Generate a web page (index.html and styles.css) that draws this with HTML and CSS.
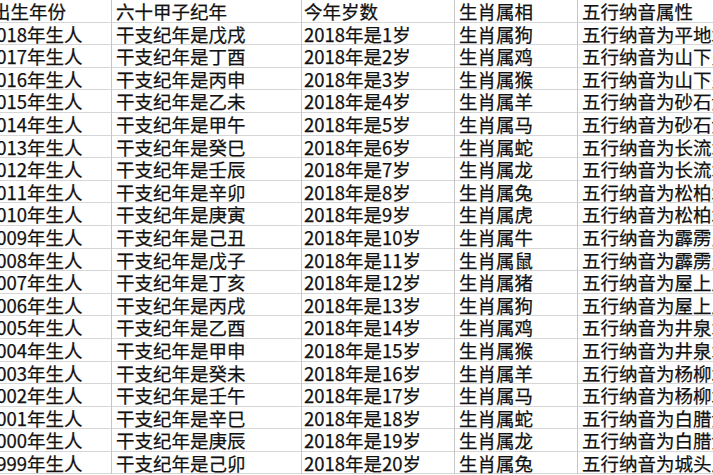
FILE: index.html
```html
<!DOCTYPE html>
<html lang="zh-CN">
<head>
<meta charset="utf-8">
<title>生肖纳音表</title>
<link rel="stylesheet" href="styles.css">
</head>
<body>
<div class="sheet">
  <div class="row head"><div class="c c1">出生年份</div><div class="c c2">六十甲子纪年</div><div class="c c3">今年岁数</div><div class="c c4">生肖属相</div><div class="c c5">五行纳音属性</div></div>
  <div class="row"><div class="c c1">2018年生人</div><div class="c c2">干支纪年是戊戌</div><div class="c c3">2018年是1岁</div><div class="c c4">生肖属狗</div><div class="c c5">五行纳音为平地木</div></div>
  <div class="row"><div class="c c1">2017年生人</div><div class="c c2">干支纪年是丁酉</div><div class="c c3">2018年是2岁</div><div class="c c4">生肖属鸡</div><div class="c c5">五行纳音为山下火</div></div>
  <div class="row"><div class="c c1">2016年生人</div><div class="c c2">干支纪年是丙申</div><div class="c c3">2018年是3岁</div><div class="c c4">生肖属猴</div><div class="c c5">五行纳音为山下火</div></div>
  <div class="row"><div class="c c1">2015年生人</div><div class="c c2">干支纪年是乙未</div><div class="c c3">2018年是4岁</div><div class="c c4">生肖属羊</div><div class="c c5">五行纳音为砂石金</div></div>
  <div class="row"><div class="c c1">2014年生人</div><div class="c c2">干支纪年是甲午</div><div class="c c3">2018年是5岁</div><div class="c c4">生肖属马</div><div class="c c5">五行纳音为砂石金</div></div>
  <div class="row"><div class="c c1">2013年生人</div><div class="c c2">干支纪年是癸巳</div><div class="c c3">2018年是6岁</div><div class="c c4">生肖属蛇</div><div class="c c5">五行纳音为长流水</div></div>
  <div class="row"><div class="c c1">2012年生人</div><div class="c c2">干支纪年是壬辰</div><div class="c c3">2018年是7岁</div><div class="c c4">生肖属龙</div><div class="c c5">五行纳音为长流水</div></div>
  <div class="row"><div class="c c1">2011年生人</div><div class="c c2">干支纪年是辛卯</div><div class="c c3">2018年是8岁</div><div class="c c4">生肖属兔</div><div class="c c5">五行纳音为松柏木</div></div>
  <div class="row"><div class="c c1">2010年生人</div><div class="c c2">干支纪年是庚寅</div><div class="c c3">2018年是9岁</div><div class="c c4">生肖属虎</div><div class="c c5">五行纳音为松柏木</div></div>
  <div class="row"><div class="c c1">2009年生人</div><div class="c c2">干支纪年是己丑</div><div class="c c3">2018年是10岁</div><div class="c c4">生肖属牛</div><div class="c c5">五行纳音为霹雳火</div></div>
  <div class="row"><div class="c c1">2008年生人</div><div class="c c2">干支纪年是戊子</div><div class="c c3">2018年是11岁</div><div class="c c4">生肖属鼠</div><div class="c c5">五行纳音为霹雳火</div></div>
  <div class="row"><div class="c c1">2007年生人</div><div class="c c2">干支纪年是丁亥</div><div class="c c3">2018年是12岁</div><div class="c c4">生肖属猪</div><div class="c c5">五行纳音为屋上土</div></div>
  <div class="row"><div class="c c1">2006年生人</div><div class="c c2">干支纪年是丙戌</div><div class="c c3">2018年是13岁</div><div class="c c4">生肖属狗</div><div class="c c5">五行纳音为屋上土</div></div>
  <div class="row"><div class="c c1">2005年生人</div><div class="c c2">干支纪年是乙酉</div><div class="c c3">2018年是14岁</div><div class="c c4">生肖属鸡</div><div class="c c5">五行纳音为井泉水</div></div>
  <div class="row"><div class="c c1">2004年生人</div><div class="c c2">干支纪年是甲申</div><div class="c c3">2018年是15岁</div><div class="c c4">生肖属猴</div><div class="c c5">五行纳音为井泉水</div></div>
  <div class="row"><div class="c c1">2003年生人</div><div class="c c2">干支纪年是癸未</div><div class="c c3">2018年是16岁</div><div class="c c4">生肖属羊</div><div class="c c5">五行纳音为杨柳木</div></div>
  <div class="row"><div class="c c1">2002年生人</div><div class="c c2">干支纪年是壬午</div><div class="c c3">2018年是17岁</div><div class="c c4">生肖属马</div><div class="c c5">五行纳音为杨柳木</div></div>
  <div class="row"><div class="c c1">2001年生人</div><div class="c c2">干支纪年是辛巳</div><div class="c c3">2018年是18岁</div><div class="c c4">生肖属蛇</div><div class="c c5">五行纳音为白腊金</div></div>
  <div class="row"><div class="c c1">2000年生人</div><div class="c c2">干支纪年是庚辰</div><div class="c c3">2018年是19岁</div><div class="c c4">生肖属龙</div><div class="c c5">五行纳音为白腊金</div></div>
  <div class="row"><div class="c c1">1999年生人</div><div class="c c2">干支纪年是己卯</div><div class="c c3">2018年是20岁</div><div class="c c4">生肖属兔</div><div class="c c5">五行纳音为城头土</div></div>
</div>
</body>
</html>
```
FILE: styles.css
```css
html, body {
  margin: 0;
  padding: 0;
  background: #ffffff;
  overflow: hidden;
}

.sheet {
  display: flex;
  flex-direction: column;
  margin-left: -20px;
  width: 760px;
  font-family: "Noto Sans CJK SC", "Noto Sans", sans-serif;
  font-size: 18.5px;
  color: #111111;
  -webkit-text-stroke: 0.25px #111111;
}

.row {
  display: grid;
  grid-template-columns: 132px 190px 153px 123px 160px;
  height: 22.6px;
  box-sizing: border-box;
  border-bottom: 1px solid #d6d6d6;
}

.c {
  box-sizing: border-box;
  line-height: 22.6px;
  white-space: nowrap;
  border-right: 1px solid #c6c6c6;
  padding-left: 4px;
}

.c1 {
  padding-left: 6px;
}

.head .c1 {
  padding-left: 12px;
}

.c3 {
  padding-left: 2px;
}

.c5 {
  border-right: none;
}
```
